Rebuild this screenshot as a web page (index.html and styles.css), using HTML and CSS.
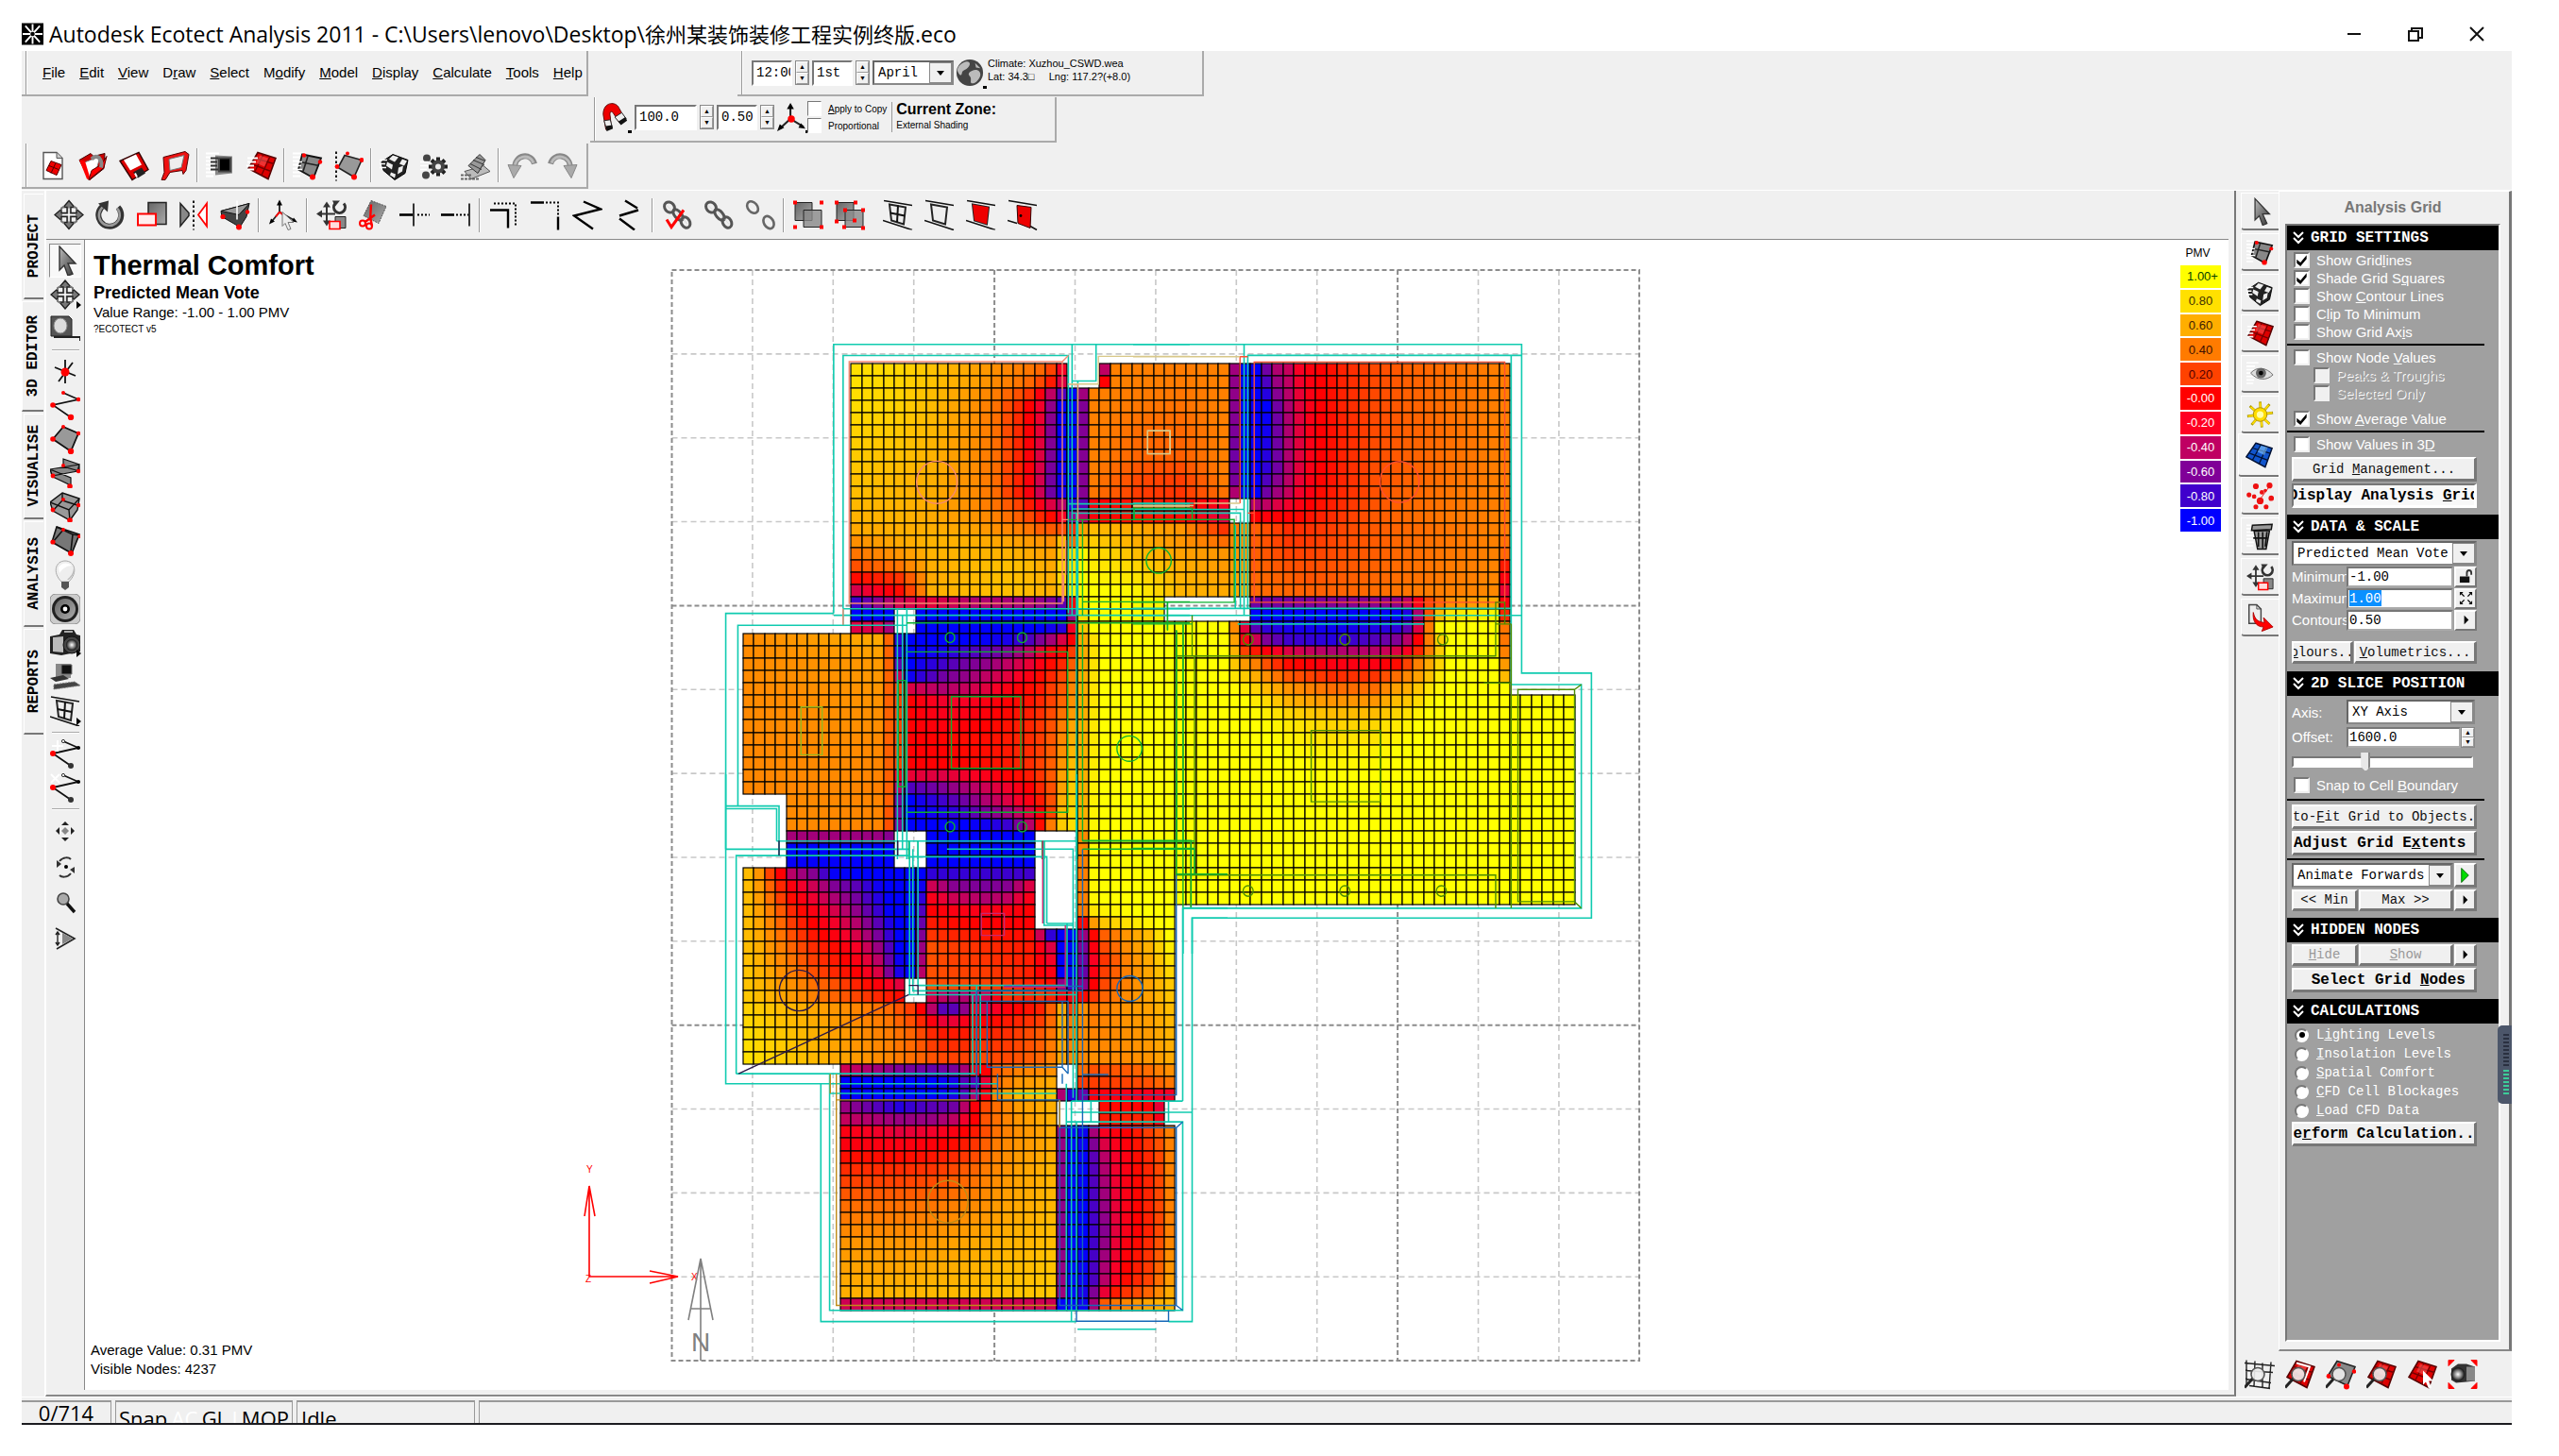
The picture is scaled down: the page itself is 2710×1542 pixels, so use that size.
FILE: index.html
```html
<!DOCTYPE html>
<html lang="en">
<head>
<meta charset="utf-8">
<title>Autodesk Ecotect Analysis 2011</title>
<link rel="stylesheet" href="styles.css">
</head>
<body>
<svg class="sprite" aria-hidden="true">
  <defs>
    <linearGradient id="g" x1="0" y1="0" x2="1" y2="1"><stop offset="0" stop-color="#bbb"/><stop offset="1" stop-color="#333"/></linearGradient>
    <linearGradient id="lg" x1="0" y1="0" x2="1" y2="1"><stop offset="0" stop-color="#fff"/><stop offset="1" stop-color="#999"/></linearGradient>
    <linearGradient id="mg" x1="0" y1="0" x2="1" y2="1"><stop offset="0" stop-color="#666"/><stop offset="1" stop-color="#aaa"/></linearGradient>
    <radialGradient id="rg"><stop offset="0" stop-color="#fff"/><stop offset=".6" stop-color="#777"/><stop offset="1" stop-color="#111"/></radialGradient>
  </defs>
  <symbol id="move" viewBox="0 0 32 32"><path d="M16 1l6 7h-4v6h6v-4l7 6-7 6v-4h-6v6h4l-6 7-6-7h4v-6H8v4l-7-6 7-6v4h6V8h-4z" fill="#777" stroke="#222" stroke-width="1.4"/><path d="M8 11v-2l3-2M21 7l3 2v2M8 21v2l3 2M21 25l3-2v-2" fill="none" stroke="#777" stroke-width="2"/><path d="M16 9v14M9 16h14" stroke="#fff" stroke-width="1.5"/></symbol>
  <symbol id="rotate" viewBox="0 0 32 32"><path d="M9 6a12 12 0 1 0 15 2" fill="none" stroke="#333" stroke-width="6"/><path d="M9 7a11 11 0 1 0 14 2" fill="none" stroke="#999" stroke-width="2.5"/><path d="M3 4L14 1l-1 12z" fill="#333"/></symbol>
  <symbol id="scale" viewBox="0 0 32 32"><path d="M12 3h19v23H12z" fill="url(#mg)" stroke="#222" stroke-width="1.5"/><path d="M1 15h19v12H1z" fill="#fee" stroke="red" stroke-width="2"/></symbol>
  <symbol id="mirror" viewBox="0 0 32 32"><path d="M2 4l9 10v3L2 28z" fill="#888" stroke="#222" stroke-width="1.5"/><path d="M30 4l-9 12 9 12z" fill="#fff" stroke="red" stroke-width="1.8"/><path d="M16 1v31" stroke="#000" stroke-width="1.8" stroke-dasharray="2.5 2.5"/></symbol>
  <symbol id="extrude" viewBox="0 0 32 32"><path d="M1 12l30-8-3 14-7 11-19-11z" fill="#444" stroke="#111"/><path d="M1 12l30-8-11 12z" fill="#999" stroke="#111"/><path d="M18 1v20" stroke="#fff" stroke-width="1.6"/><g fill="red"><circle cx="3" cy="18" r="2.6"/><circle cx="29" cy="13" r="2.2"/><circle cx="20" cy="29" r="3"/></g></symbol>
  <symbol id="axiscur" viewBox="0 0 32 32"><path d="M12 2v11L3 24M12 13l16 9" fill="none" stroke="#222" stroke-width="1.8"/><path d="M12 0l3 6H9zM1 26l2-6 4 3zM31 24l-6-1 2-4z"/><path d="M12 13l-4 5M12 13l5 4" stroke="red" stroke-width="2"/><path d="M15 13l12 11-6 0 3 7-3 1-3-7-3 3z" fill="#eee" stroke="#777"/></symbol>
  <symbol id="xform" viewBox="0 0 32 32"><path d="M11 6v18M2 15h18" stroke="#333" stroke-width="2"/><path d="M11 2L7 8h8zM11 28l-4-6h8zM0 15l6-4v8z" fill="#333"/><path d="M20 4a6 6 0 1 0 9 0" fill="none" stroke="#333" stroke-width="3"/><path d="M17 1h8l-5 6z" fill="#333"/><path d="M20 18h11v12H20z" fill="#888" stroke="#222"/><path d="M14 23h11v8H14z" fill="#fdd" stroke="red" stroke-width="1.6"/></symbol>
  <symbol id="cut" viewBox="0 0 32 32"><path d="M14 1l16 6-8 18-16-8z" fill="url(#mg)" stroke="#555" stroke-dasharray="2 1"/><path d="M14 5l-1 17M7 24l11-8M13 18l2 10" stroke="red" stroke-width="2.4"/><circle cx="5" cy="25" r="3" fill="none" stroke="red" stroke-width="2"/><circle cx="12" cy="28" r="3" fill="none" stroke="red" stroke-width="2"/></symbol>
  <symbol id="trim" viewBox="0 0 32 32"><path d="M0 16h15" stroke="#000" stroke-width="2.6"/><path d="M15 4v24" stroke="#333" stroke-width="2"/><path d="M19 16h13" stroke="#000" stroke-width="2" stroke-dasharray="2 2"/></symbol>
  <symbol id="extend" viewBox="0 0 32 32"><path d="M0 16h14" stroke="#000" stroke-width="2.6"/><path d="M30 4v24" stroke="#333" stroke-width="2"/><path d="M16 16h13" stroke="#000" stroke-width="2" stroke-dasharray="2 2"/></symbol>
  <symbol id="fillet" viewBox="0 0 32 32"><path d="M1 11h19v19" fill="none" stroke="#000" stroke-width="2.4"/><path d="M5 4h23v24" fill="none" stroke="#000" stroke-width="2" stroke-dasharray="2 2"/></symbol>
  <symbol id="chamfer" viewBox="0 0 32 32"><path d="M0 3h14M29 18v14" stroke="#000" stroke-width="2.4"/><path d="M16 3h13v14" fill="none" stroke="#000" stroke-width="2" stroke-dasharray="2 2"/></symbol>
  <symbol id="zig" viewBox="0 0 32 32"><path d="M12 2l18 8L2 17l20 14" fill="none" stroke="#000" stroke-width="2.4"/></symbol>
  <symbol id="zig2" viewBox="0 0 32 32"><path d="M12 1l13 8M26 11L6 17M6 20l16 12" fill="none" stroke="#000" stroke-width="2.4"/></symbol>
  <symbol id="chain" viewBox="0 0 32 32"><g fill="none" stroke="#555" stroke-width="3"><ellipse cx="8" cy="8" rx="5" ry="6" transform="rotate(-40 8 8)"/><ellipse cx="17" cy="16" rx="3.5" ry="7" transform="rotate(-40 17 16)"/><ellipse cx="25" cy="24" rx="4.5" ry="6" transform="rotate(-30 25 24)"/></g><path d="M5 6l5 5M15 13l5 6M23 21l4 5" stroke="#ddd"/></symbol>
  <symbol id="link" viewBox="0 0 32 32"><use href="#chain"/><path d="M5 21l5 8L23 11" fill="none" stroke="red" stroke-width="3"/></symbol>
  <symbol id="unlink" viewBox="0 0 32 32"><g fill="none" stroke="#666" stroke-width="2.6"><ellipse cx="8" cy="8" rx="5" ry="7" transform="rotate(-40 8 8)"/><ellipse cx="25" cy="24" rx="5" ry="7" transform="rotate(-30 25 24)"/></g></symbol>
  <symbol id="group" viewBox="0 0 32 32"><path d="M2 3h18v19H2z" fill="url(#mg)" stroke="#222"/><path d="M11 11h19v18H11z" fill="#888" fill-opacity=".8" stroke="#222"/><path d="M0 1h4v4H0zM28 1h4v4h-4zM0 27h4v4H0zM28 27h4v4h-4z" fill="red"/></symbol>
  <symbol id="group2" viewBox="0 0 32 32"><path d="M2 3h18v19H2z" fill="url(#mg)" stroke="#222"/><path d="M11 11h19v18H11z" fill="#888" fill-opacity=".8" stroke="#222"/><path d="M0 1h4v4H0zM20 1h4v4h-4zM0 21h4v4H0zM9 9h4v4H9zM28 9h4v4h-4zM28 28h4v4h-4zM8 27h4v4H8zM19 20h4v4h-4z" fill="red"/></symbol>
  <symbol id="void" viewBox="0 0 32 32"><path d="M1 1l30 5M0 22l31 10" stroke="#111" stroke-width="1.6"/><path d="M7 5l17 3-2 18-13-4z" fill="#eee" stroke="#222" stroke-width="2"/></symbol>
  <symbol id="window" viewBox="0 0 32 32"><use href="#void"/><path d="M16 6l-1 18M8 14l15 3" stroke="#111" stroke-width="2"/></symbol>
  <symbol id="panelred" viewBox="0 0 32 32"><use href="#void"/><path d="M7 5l17 3-2 18-13-4z" fill="#e00"/></symbol>
  <symbol id="door" viewBox="0 0 32 32"><path d="M1 1l30 5M0 22l10 3M24 28l7 4" stroke="#111" stroke-width="1.6"/><path d="M10 6l15 2-1 22-13-5z" fill="#e00" stroke="#300"/><circle cx="14" cy="17" r="1.4"/></symbol>
  <symbol id="doc" viewBox="0 0 32 32"><path d="M6 2h14l6 6v22H6z" fill="#fff" stroke="#555" stroke-width="1.4"/><path d="M20 2v6h6" fill="#ccc" stroke="#555"/><path d="M14 11l11 4-5 11-11-5z" fill="#e00" stroke="#500"/><path d="M12 16l10 4M19 13l-5 11" stroke="#500"/></symbol>
  <symbol id="open" viewBox="0 0 32 32"><path d="M1 10L13 3l3 3 12-3-1 16-15 12z" fill="#c00" stroke="#400"/><path d="M5 13l18-7-4 15-8 10z" fill="#fff" stroke="#777"/><path d="M1 10l6 1 6 20-4-1z" fill="red"/><path d="M11 31L27 18l3-12-6 9-10 6z" fill="red" stroke="#500"/><path d="M14 9c6-6 12 0 10 9" fill="none" stroke="#888" stroke-width="4"/></symbol>
  <symbol id="save" viewBox="0 0 32 32"><path d="M1 11L21 2l10 18-17 11z" fill="#d00" stroke="#300" stroke-width="1.4"/><path d="M5 10l13-6 6 11-12 6z" fill="#fff"/><path d="M15 23l9-5 4 6-8 5z" fill="#222"/><path d="M17 24l2 4" stroke="#fff" stroke-width="2"/></symbol>
  <symbol id="book" viewBox="0 0 32 32"><path d="M4 7L27 1l4 3-3 17-3 4-1-4-13 2-5 8H2l3-8z" fill="#e11" stroke="#500"/><path d="M10 9l16-4-3 13-12 3z" fill="#eee" stroke="#777"/></symbol>
  <symbol id="speed" viewBox="0 0 32 32"><path d="M0 3h14M0 7h10M0 11h12M0 15h9M0 19h10M0 23h9M0 27h8" stroke="#fff" stroke-width="1.8"/></symbol>
  <symbol id="print" viewBox="0 0 32 32"><use href="#speed"/><path d="M10 5l18 1v18l-18 2z" fill="#888"/><path d="M14 8h12v14H14z" fill="#000" stroke="#444" stroke-width="2"/><path d="M5 8h8M5 12h7M5 16h7M5 20h8" stroke="#333" stroke-width="2"/></symbol>
  <symbol id="mesh" viewBox="0 0 32 32"><path d="M12 2l19 6-8 22-21-11z" fill="#d00" stroke="#500" stroke-width="1.6"/><path d="M18 4l-9 18M25 6l-9 20M9 8l20 6M5 14l21 8" stroke="#700" stroke-width="1.4"/><path d="M14 5l9 3-4 9-9-4z" fill="#f66" opacity=".5"/></symbol>
  <symbol id="redgrid" viewBox="0 0 32 32"><use href="#mesh"/><path d="M1 8h11M1 12h9M0 16h8M1 20h7" stroke="#fff" stroke-width="1.8"/></symbol>
  <symbol id="bluegrid" viewBox="0 0 32 32"><path d="M12 2l19 6-8 22L1 18z" fill="#15c" stroke="#013" stroke-width="1.6"/><path d="M18 4l-10 18M25 6l-9 20M9 8l20 6M5 14l21 8" stroke="#013" stroke-width="1.4"/><path d="M18 5l8 2-4 9-8-4z" fill="#8cf" opacity=".6"/></symbol>
  <symbol id="grayplane" viewBox="0 0 32 32"><use href="#speed"/><path d="M10 4l20 4-8 21-16-9z" fill="#888" stroke="#111" stroke-width="1.8"/><path d="M8 12l20 4M16 6l-5 16" stroke="#222" stroke-width="1.6"/><path d="M4 12h6M3 16h6M4 20h6" stroke="#fff" stroke-width="1.6"/><g fill="red"><circle cx="12" cy="5" r="2.2"/><circle cx="29" cy="12" r="2.2"/><circle cx="21" cy="28" r="3"/></g></symbol>
  <symbol id="dotplane" viewBox="0 0 32 32"><path d="M12 5l18 5-8 18-17-10z" fill="#999" stroke="#222" stroke-width="1.6"/><path d="M3 1v31" stroke="#000" stroke-width="1.8" stroke-dasharray="2.5 2.5"/><g fill="red"><circle cx="15" cy="3" r="2"/><circle cx="30" cy="10" r="2.4"/><circle cx="4" cy="17" r="2.4"/><circle cx="22" cy="28" r="3"/></g></symbol>
  <symbol id="cube" viewBox="0 0 32 32"><path d="M14 4l16 6-3 14-11 7L4 21 2 12z" fill="#222" stroke="#000"/><path d="M14 5l6 2-4 5-6-3zM24 9l5 2-3 5-5-2zM8 12l6 3-1 5-6-4zM20 18l5-2-1 6-5 3zM12 23l5 2-1 4-5-3z" fill="#eee"/><path d="M0 10h8M0 14h6M0 18h7" stroke="#fff" stroke-width="1.6"/></symbol>
  <symbol id="gear" viewBox="0 0 32 32"><g stroke="#222" stroke-width="4"><path d="M19 7v20M9 17h20M12 10l14 14M26 10L12 24"/></g><circle cx="19" cy="17" r="7" fill="#444"/><circle cx="19" cy="17" r="3" fill="#eee"/><circle cx="7" cy="8" r="4" fill="#444"/><circle cx="6" cy="26" r="4" fill="#444"/><path d="M0 12h9M0 16h8M0 20h7" stroke="#fff" stroke-width="1.6"/></symbol>
  <symbol id="stack" viewBox="0 0 32 32"><path d="M4 22l20-6 7 6-20 8z" fill="#bbb" stroke="#555"/><path d="M8 16l12-12 6 6-8 14z" fill="#999" stroke="#333"/><path d="M10 14l12 6M13 10l12 5M16 7l10 4" stroke="#333"/><path d="M0 26h12M0 30h20" stroke="#666" stroke-width="2" stroke-dasharray="3 1"/></symbol>
  <symbol id="undo" viewBox="0 0 32 32"><path d="M8 19C8 3 26 2 29 14" fill="none" stroke="#888" stroke-width="6"/><path d="M8 19C8 4 25 3 28 13" fill="none" stroke="#bbb" stroke-width="3"/><path d="M1 15l14 1-8 13z" fill="#aaa" stroke="#888"/></symbol>
  <symbol id="redo" viewBox="0 0 32 32"><path d="M24 19C24 3 6 2 3 14" fill="none" stroke="#888" stroke-width="6"/><path d="M24 19C24 4 7 3 4 13" fill="none" stroke="#bbb" stroke-width="3"/><path d="M31 15l-14 1 8 13z" fill="#aaa" stroke="#888"/></symbol>
  <symbol id="arrow" viewBox="0 0 32 32"><path d="M10 1l17 18h-8l5 11-5 2-4-11-5 5z" fill="url(#g)" stroke="#333" stroke-width="1.4"/></symbol>
  <symbol id="tape" viewBox="0 0 32 32"><path d="M1 3h19l3 3v18H1z" fill="#555" stroke="#222"/><ellipse cx="11" cy="13" rx="7" ry="8" fill="#ddd" stroke="#888"/><path d="M4 25h28v4" fill="none" stroke="#222" stroke-width="2"/></symbol>
  <symbol id="node" viewBox="0 0 32 32"><path d="M16 4v25M5 12l22 9M24 7L9 27" stroke="#111" stroke-width="1.8"/><circle cx="16" cy="17" r="4.5" fill="red"/></symbol>
  <symbol id="polyline" viewBox="0 0 32 32"><path d="M14 3l16 7L3 16l19 13" fill="none" stroke="#111" stroke-width="1.6"/><g fill="red"><circle cx="14" cy="3" r="2"/><circle cx="30" cy="10" r="2.2"/><circle cx="3" cy="16" r="2.8"/><circle cx="22" cy="29" r="3.2"/></g></symbol>
  <symbol id="plane" viewBox="0 0 32 32"><path d="M14 3l16 7-8 19L3 16z" fill="#999" stroke="#111" stroke-width="1.8"/><g fill="red"><circle cx="14" cy="3" r="2"/><circle cx="30" cy="10" r="2.2"/><circle cx="3" cy="16" r="2.8"/><circle cx="22" cy="29" r="3.2"/></g></symbol>
  <symbol id="wall" viewBox="0 0 32 32"><path d="M14 1l17 6v7l-17-5zM0 12l31-5-2 7-27 5zM0 12l22 9v8L3 20z" fill="#888" stroke="#111" stroke-width="1.2"/><g fill="red"><circle cx="14" cy="8" r="2"/><circle cx="30" cy="14" r="2.2"/><circle cx="3" cy="19" r="2.4"/><circle cx="21" cy="30" r="2.8"/></g></symbol>
  <symbol id="box" viewBox="0 0 32 32"><path d="M13 1l18 6-2 12-8 11L3 20 0 11z" fill="#999" stroke="#111" stroke-width="1.4"/><path d="M0 11l20 8 11-12M20 19l1 11M13 1v8L3 20M13 9l16 5" fill="none" stroke="#111" stroke-width="1.4"/><g fill="red"><circle cx="14" cy="8" r="2"/><circle cx="30" cy="14" r="2.2"/><circle cx="3" cy="19" r="2.4"/><circle cx="21" cy="30" r="2.8"/></g></symbol>
  <symbol id="roof" viewBox="0 0 32 32"><path d="M7 1l24 8-8 20L2 17z" fill="#777" stroke="#111" stroke-width="1.6"/><path d="M7 1l17 8-2 18M24 9l7 1M14 4L3 17" fill="none" stroke="#111" stroke-width="1.6"/><g fill="red"><circle cx="14" cy="4" r="2"/><circle cx="31" cy="11" r="2"/><circle cx="3" cy="17" r="2.6"/><circle cx="22" cy="29" r="3"/></g></symbol>
  <symbol id="bulb" viewBox="0 0 32 32"><path d="M12 23C2 13 6 1 16 1s14 12 4 22z" fill="#eee" stroke="#aaa"/><path d="M9 8c3-5 9-6 14-2-5 0-10 3-13 8z" fill="#fff"/><path d="M20 21c5-5 7-9 5-14 0 8-4 11-7 14z" fill="#bbb"/><path d="M12 23h8v6l-4 3-4-3z" fill="#555"/></symbol>
  <symbol id="speaker" viewBox="0 0 32 32"><rect width="32" height="32" rx="6" fill="#ccc" stroke="#888"/><circle cx="16" cy="16" r="14" fill="#222"/><circle cx="16" cy="16" r="11" fill="url(#mg)"/><circle cx="16" cy="16" r="5" fill="#000"/><circle cx="16" cy="16" r="2.4" fill="#fff"/></symbol>
  <symbol id="camera" viewBox="0 0 32 32"><path d="M0 9l10-2 3-5h12l3 5 4 1v17l-20 4L0 27z" fill="#222"/><path d="M3 10l11-1v17l-11-1z" fill="#bbb"/><circle cx="23" cy="18" r="9" fill="#444" stroke="#111"/><circle cx="23" cy="18" r="6" fill="url(#rg)"/><path d="M15 4h9" stroke="#aaa" stroke-width="2"/></symbol>
  <symbol id="pc" viewBox="0 0 32 32"><path d="M6 2h16v15H6z" fill="#888"/><path d="M12 3h11v10H12z" fill="#111" stroke="#777"/><path d="M0 17l14-3 6 4-14 3z" fill="#333"/><path d="M4 24l22-3 6 4-28 4z" fill="#444" stroke="#777" stroke-dasharray="2 1"/></symbol>
  <symbol id="polyadd" viewBox="0 0 32 32"><path d="M14 3l16 7L3 16l19 13" fill="none" stroke="#111" stroke-width="1.8"/><circle cx="14" cy="3" r="1.6" fill="#fff" stroke="#333"/><circle cx="30" cy="10" r="2"/><circle cx="22" cy="29" r="3" fill="#333"/><circle cx="3" cy="16" r="3" fill="red"/><path d="M8 2v12M2 8h12" stroke="#fff" stroke-width="2"/></symbol>
  <symbol id="polydel" viewBox="0 0 32 32"><path d="M14 3l16 7L3 16l19 13" fill="none" stroke="#111" stroke-width="1.8"/><circle cx="14" cy="3" r="1.6" fill="#fff" stroke="#333"/><circle cx="30" cy="10" r="2"/><circle cx="22" cy="29" r="3" fill="#333"/><circle cx="3" cy="16" r="3" fill="red"/><path d="M1 2l9 9M10 2l-9 9" stroke="#fff" stroke-width="2"/></symbol>
  <symbol id="pan" viewBox="0 0 32 32"><path d="M16 6l4 4h-8zM16 27l4-4h-8zM6 16l4-4v8zM26 16l-4-4v8z" fill="#222"/><path d="M16 12l4 4-4 4-4-4z" fill="#888"/></symbol>
  <symbol id="orbit" viewBox="0 0 32 32"><path d="M10 10c4-5 10-4 12-2M22 23c-4 5-10 4-12 2" fill="none" stroke="#333" stroke-width="2"/><path d="M7 9l5 4-5 4zM26 23l-5-4 5-3z" fill="#333"/><circle cx="17" cy="16" r="2"/></symbol>
  <symbol id="zoom" viewBox="0 0 32 32"><circle cx="14" cy="12" r="6" fill="#aaa" stroke="#444" stroke-width="1.6"/><path d="M18 17l8 9" stroke="#111" stroke-width="3.4"/></symbol>
  <symbol id="fov" viewBox="0 0 32 32"><path d="M6 5l20 11L7 27" fill="none" stroke="#222" stroke-width="1.6"/><path d="M13 10l11 6-11 6z" fill="#888"/><path d="M8 10v12M6 12l2-3 2 3M6 20l2 3 2-3" fill="none" stroke="#222" stroke-width="1.4"/></symbol>
  <symbol id="magnet" viewBox="0 0 32 32"><path d="M6 30L3 13C3-2 18-2 21 6l6 11-6 5-7-11c-3-3-4 0-3 5l1 11z" fill="#e00" stroke="#500"/><path d="M4 20l7-1 2 8-6 4zM16 16l8-5 5 7-7 5z" fill="#eee" stroke="#222"/><path d="M6 26l7-1 1 4-7 3zM20 21l8-5 2 4-7 5z" fill="#111"/></symbol>
  <symbol id="axes" viewBox="0 0 32 32"><path d="M15 2v16L3 29M15 18l15 9" fill="none" stroke="#222" stroke-width="2.2"/><path d="M15 0l4 7h-8zM0 32l3-8 5 4zM32 29l-8-1 3-5z"/><circle cx="16" cy="18" r="4" fill="red"/></symbol>
  <symbol id="globe" viewBox="0 0 32 32"><circle cx="16" cy="16" r="15" fill="#444"/><path d="M8 5c8-4 10 1 6 5s-6 2-7 7-5-2-5-4 2-6 6-8zM18 14c6-3 10 0 10 4s-5 10-9 10 0-5-3-8 0-5 2-6zM22 5l6 6-5-1z" fill="#bbb"/></symbol>
  <symbol id="eye" viewBox="0 0 32 32"><use href="#speed"/><path d="M5 15c7-8 18-7 26 2-7 7-18 7-26-2z" fill="#ddd" stroke="#666"/><circle cx="17" cy="15" r="6" fill="#666"/><circle cx="17" cy="15" r="2.6"/></symbol>
  <symbol id="sun" viewBox="0 0 32 32"><g stroke="#a90" stroke-width="3"><path d="M16 1l2 30M1 18l30-4M4 6l23 21M27 4L6 28"/></g><g stroke="#fd0" stroke-width="2"><path d="M16 2l2 28M2 18l28-4M5 7l22 20M26 5L7 27"/></g><circle cx="16" cy="16" r="8" fill="#fd0" stroke="#a80"/><circle cx="16" cy="16" r="4" fill="#ffa"/></symbol>
  <symbol id="reddots" viewBox="0 0 32 32"><g fill="#e11"><circle cx="11" cy="5" r="3.4"/><circle cx="27" cy="4" r="3.4"/><circle cx="3" cy="15" r="2.8"/><circle cx="9" cy="17" r="2.6"/><circle cx="18" cy="12" r="2.6"/><circle cx="29" cy="19" r="3.2"/><circle cx="16" cy="22" r="4"/><circle cx="11" cy="29" r="2.8"/><circle cx="23" cy="29" r="2.8"/><circle cx="22" cy="10" r="2"/></g><path d="M16 20L27 5" stroke="#e11"/></symbol>
  <symbol id="trash" viewBox="0 0 32 32"><use href="#speed"/><path d="M7 3l23-1-1 6-23 1zM9 10l18-1-4 22H13z" fill="#999" stroke="#111" stroke-width="1.6"/><path d="M14 11v17M19 11v19M24 11l-2 17M8 18h17" stroke="#111" stroke-width="1.8"/></symbol>
  <symbol id="export" viewBox="0 0 32 32"><path d="M3 1h9l5 5v17H3z" fill="#eee" stroke="#444" stroke-width="1.6"/><path d="M12 1v5h5" fill="none" stroke="#444"/><path d="M8 10c2 9 6 11 13 12l-1-6 11 11-13 5 2-5C11 27 7 20 8 10z" fill="red" stroke="#a00"/></symbol>
  <symbol id="lens" viewBox="0 0 32 32"><path d="M9 20l-9 10" stroke="#222" stroke-width="3"/><circle cx="14" cy="16" r="7" fill="#eee" fill-opacity=".9" stroke="#555" stroke-width="1.6"/></symbol>
  <symbol id="zoomgrid" viewBox="0 0 32 32"><path d="M2 1v27M11 2l-1 27M19 4v26M28 3l-2 28M0 4l32 3M1 12l29 2M1 21l27 4M5 28l22 3" stroke="#222" stroke-width="1.4"/><use href="#lens"/></symbol>
  <symbol id="zoomall" viewBox="0 0 32 32"><use href="#mesh"/><path d="M12 4l14 4-6 16" fill="none" stroke="#fff" stroke-width="2"/><use href="#lens"/></symbol>
  <symbol id="zoomplane" viewBox="0 0 32 32"><path d="M12 2l19 6-8 20L2 18z" fill="#888" stroke="#222" stroke-width="1.6"/><g fill="red"><circle cx="14" cy="6" r="2"/><circle cx="3" cy="18" r="2.4"/><circle cx="30" cy="13" r="2.2"/><circle cx="22" cy="29" r="3"/></g><use href="#lens"/></symbol>
  <symbol id="zoommesh" viewBox="0 0 32 32"><use href="#mesh"/><use href="#lens"/></symbol>
  <symbol id="pickmesh" viewBox="0 0 32 32"><use href="#mesh"/><path d="M17 12l11 11h-5l3 7-3 1-3-7-3 3z" fill="#fff"/></symbol>
  <symbol id="snapshot" viewBox="0 0 32 32"><path d="M1 1h6L1 7zM31 1h-6l6 6zM1 31h6l-6-6zM31 31h-6l6-6z" fill="red" stroke="red"/><path d="M4 10l7-5h9l9 3v15l-9 1-11 1-5-3z" fill="#333"/><path d="M20 8h9v15h-9z" fill="#888"/><circle cx="11" cy="16" r="7" fill="url(#rg)" stroke="#222"/></symbol>
</svg>

<header class="titlebar">
  <svg class="logo" viewBox="0 0 24 24" aria-hidden="true"><path d="M0 0h24v24H0z"/><path d="M12 1v22M1 12h22M4 3l16 18M20 3L4 21" stroke="#fff" stroke-width="2"/><circle cx="12" cy="12" r="2.4"/></svg>
  <h1>Autodesk Ecotect Analysis 2011 - C:\Users\lenovo\Desktop\<span lang="zh">徐州某装饰装修工程实例终版</span>.eco</h1>
  <div class="wincontrols">
    <button aria-label="Minimize"><svg viewBox="0 0 16 16"><path d="M1 8h14"/></svg></button>
    <button aria-label="Restore"><svg viewBox="0 0 16 16"><path d="M1 5h10v10H1zM4 5V2h11v10h-4"/></svg></button>
    <button aria-label="Close"><svg viewBox="0 0 16 16"><path d="M1 1l14 14M15 1L1 15"/></svg></button>
  </div>
</header>

<div class="app">
  <div class="bars">
    <div class="barrow">
      <nav class="bar menubar">
        <a href="#"><u>F</u>ile</a><a href="#"><u>E</u>dit</a><a href="#"><u>V</u>iew</a><a href="#">D<u>r</u>aw</a><a href="#"><u>S</u>elect</a><a href="#">M<u>o</u>dify</a><a href="#"><u>M</u>odel</a><a href="#"><u>D</u>isplay</a><a href="#"><u>C</u>alculate</a><a href="#"><u>T</u>ools</a><a href="#"><u>H</u>elp</a>
      </nav>
      <div class="bar datebar">
        <input class="field short" aria-label="Time" value="12:00"><span class="spin"><button aria-label="Later">▲</button><button aria-label="Earlier">▼</button></span>
        <input class="field short" aria-label="Day" value="1st"><span class="spin"><button aria-label="Next day">▲</button><button aria-label="Previous day">▼</button></span>
        <span class="combo month"><select aria-label="Month"><option>April</option></select><i></i></span>
        <button class="drop" aria-label="Location"><svg><use href="#globe"/></svg></button>
        <p class="climate">Climate: Xuzhou_CSWD.wea<br>Lat: 34.3□ &nbsp; &nbsp; Lng: 117.2?(+8.0)</p>
      </div>
    </div>
    <div class="barrow">
      <div class="bar snapbar">
        <button class="drop" aria-label="Snap"><svg><use href="#magnet"/></svg></button>
        <input class="field long" aria-label="Grid size" value="100.0"><span class="spin"><button aria-label="Larger grid">▲</button><button aria-label="Smaller grid">▼</button></span>
        <input class="field short" aria-label="Snap step" value="0.50"><span class="spin"><button aria-label="Larger step">▲</button><button aria-label="Smaller step">▼</button></span>
        <button class="drop axesbtn" aria-label="Axes"><svg><use href="#axes"/></svg></button>
        <div class="tinychecks">
          <label><input type="checkbox"><span><u>A</u>pply to Copy</span></label>
          <label><input type="checkbox"><span>Proportional</span></label>
        </div>
        <p class="zone"><b>Current Zone:</b><br>External Shading</p>
      </div>
    </div>
    <div class="barrow">
      <div class="bar iconbar">
        <button class="tool" aria-label="New"><svg><use href="#doc"/></svg></button>
        <button class="tool" aria-label="Open"><svg><use href="#open"/></svg></button>
        <button class="tool" aria-label="Save"><svg><use href="#save"/></svg></button>
        <button class="tool" aria-label="Library"><svg><use href="#book"/></svg></button>
        <i class="sep"></i>
        <button class="tool" aria-label="Print"><svg><use href="#print"/></svg></button>
        <button class="tool" aria-label="Model grid"><svg><use href="#redgrid"/></svg></button>
        <i class="sep"></i>
        <button class="tool" aria-label="Materials"><svg><use href="#grayplane"/></svg></button>
        <button class="tool" aria-label="Zones"><svg><use href="#dotplane"/></svg></button>
        <i class="sep"></i>
        <button class="tool" aria-label="Blocks"><svg><use href="#cube"/></svg></button>
        <button class="tool" aria-label="Settings"><svg><use href="#gear"/></svg></button>
        <button class="tool" aria-label="Schedules"><svg><use href="#stack"/></svg></button>
        <i class="sep"></i>
        <button class="tool" aria-label="Undo"><svg><use href="#undo"/></svg></button>
        <button class="tool" aria-label="Redo"><svg><use href="#redo"/></svg></button>
      </div>
    </div>
  </div>

  <div class="work">
    <nav class="pagetabs">
      <button><span>PROJECT</span></button>
      <button class="current"><span>3D EDITOR</span></button>
      <button><span>VISUALISE</span></button>
      <button><span>ANALYSIS</span></button>
      <button><span>REPORTS</span></button>
    </nav>

    <main class="editor">
      <div class="toolbar">
        <button class="tool" aria-label="Move"><svg><use href="#move"/></svg></button>
        <button class="tool" aria-label="Rotate"><svg><use href="#rotate"/></svg></button>
        <button class="tool" aria-label="Scale"><svg><use href="#scale"/></svg></button>
        <button class="tool" aria-label="Mirror"><svg><use href="#mirror"/></svg></button>
        <button class="tool" aria-label="Extrude"><svg><use href="#extrude"/></svg></button>
        <i class="sep"></i>
        <button class="tool" aria-label="Set origin"><svg><use href="#axiscur"/></svg></button>
        <i class="sep"></i>
        <button class="tool" aria-label="Transform"><svg><use href="#xform"/></svg></button>
        <button class="tool" aria-label="Cut"><svg><use href="#cut"/></svg></button>
        <button class="tool" aria-label="Trim"><svg><use href="#trim"/></svg></button>
        <button class="tool" aria-label="Extend"><svg><use href="#extend"/></svg></button>
        <i class="sep"></i>
        <button class="tool" aria-label="Offset"><svg><use href="#fillet"/></svg></button>
        <button class="tool" aria-label="Corner"><svg><use href="#chamfer"/></svg></button>
        <button class="tool" aria-label="Join"><svg><use href="#zig"/></svg></button>
        <button class="tool" aria-label="Break"><svg><use href="#zig2"/></svg></button>
        <i class="sep"></i>
        <button class="tool" aria-label="Check links"><svg><use href="#link"/></svg></button>
        <button class="tool" aria-label="Link"><svg><use href="#chain"/></svg></button>
        <button class="tool" aria-label="Unlink"><svg><use href="#unlink"/></svg></button>
        <i class="sep"></i>
        <button class="tool" aria-label="Group"><svg><use href="#group"/></svg></button>
        <button class="tool" aria-label="Ungroup"><svg><use href="#group2"/></svg></button>
        <i class="sep blank"></i>
        <button class="tool" aria-label="Add window"><svg><use href="#window"/></svg></button>
        <button class="tool" aria-label="Add void"><svg><use href="#void"/></svg></button>
        <button class="tool" aria-label="Add panel"><svg><use href="#panelred"/></svg></button>
        <button class="tool" aria-label="Add door"><svg><use href="#door"/></svg></button>
      </div>
      <div class="stage">
        <div class="sidebar">
          <button class="side pressed" aria-label="Select"><svg><use href="#arrow"/></svg></button>
          <button class="side more" aria-label="Move"><svg><use href="#move"/></svg></button>
          <button class="side" aria-label="Measure"><svg><use href="#tape"/></svg></button>
          <hr>
          <button class="side" aria-label="Point"><svg><use href="#node"/></svg></button>
          <button class="side" aria-label="Line"><svg><use href="#polyline"/></svg></button>
          <button class="side" aria-label="Plane"><svg><use href="#plane"/></svg></button>
          <button class="side" aria-label="Partition"><svg><use href="#wall"/></svg></button>
          <button class="side" aria-label="Zone"><svg><use href="#box"/></svg></button>
          <button class="side" aria-label="Roof"><svg><use href="#roof"/></svg></button>
          <button class="side" aria-label="Light"><svg><use href="#bulb"/></svg></button>
          <button class="side" aria-label="Speaker"><svg><use href="#speaker"/></svg></button>
          <button class="side more" aria-label="Camera"><svg><use href="#camera"/></svg></button>
          <button class="side" aria-label="Appliance"><svg><use href="#pc"/></svg></button>
          <button class="side more" aria-label="Window"><svg><use href="#window"/></svg></button>
          <hr>
          <button class="side" aria-label="Add node"><svg><use href="#polyadd"/></svg></button>
          <button class="side" aria-label="Delete node"><svg><use href="#polydel"/></svg></button>
          <hr>
          <button class="side view" aria-label="Pan"><svg><use href="#pan"/></svg></button>
          <button class="side view" aria-label="Orbit"><svg><use href="#orbit"/></svg></button>
          <button class="side view" aria-label="Zoom"><svg><use href="#zoom"/></svg></button>
          <button class="side view" aria-label="Field of view"><svg><use href="#fov"/></svg></button>
        </div>
        <section class="viewport">
          <svg class="plan" viewBox="90 254 2270 1218" role="img" aria-label="Floor plan with thermal comfort grid">
            <g id="refgrid"></g>
            <g id="heat"></g>
            <g class="lines" transform="translate(700 270) scale(.35714 .40816)">
              <path class="teal" d="M512 930V232H1568M540 918V261H1208V930M512 930H192V1542M228 1430V961H727M192 1430H350V1560M192 1437H343V1521M192 1542H736M343 1521H1232M540 918H1568M512 935H1568M1219 232V935M1219 327H1290V232M1236 327V935M701 920V1568M716 935V1540M729 920V1568M1232 670V1568M1208 646H1568M1219 659H1568M1219 670H1568M540 920V960"/>
              <path class="green" d="M1250 687V935M1208 687H1568M729 955H1568M729 1030H1206V1446H729M861 1146h206v186h-206zM1250 1521H1568M1250 960V1521M1502 900V973M1250 900H1568M1528 973V1521M1402 646V687M704 1104h21v276h-21zM1548 960V1521M735 1521V1568M762 1521V1568M1130 1521V1568M1136 1521V1568"/>
              <path class="dark" d="M1235 935V1568"/>
              <g class="green"><ellipse cx="1389" cy="1281" rx="37" ry="33"/><ellipse cx="857" cy="993" rx="14" ry="13"/><ellipse cx="1071" cy="993" rx="14" ry="13"/><ellipse cx="857" cy="1484" rx="14" ry="13"/><ellipse cx="1071" cy="1484" rx="14" ry="13"/></g>
              <ellipse class="green" cx="1476" cy="793" rx="37" ry="33"/>
              <path class="salmon" d="M558 904V277H1190V904zM1190 277l18-16M1190 687h18M1200 740V830M1194 830V900M540 918V960M1208 335H1236V690"/>
              <ellipse class="salmon" cx="818" cy="590" rx="60" ry="55"/>
              <path class="tan" d="M1443 456h66v60h-66zM1568 263H1297V335H1208M1400 652H1568"/>
              <path class="lime" d="M415 1173h63v124h-63z"/>
            </g>
            <g class="lines" transform="translate(1200 330) scale(.35714 .43365)">
              <path class="teal" d="M0 80H1152V883H1359V1481H175V1568M340 725V107H1152M1121 107V911H1329V1457H148V1568M329 80V742M0 725H1120M0 742H1152M310 763H863M0 468H179M0 483H330M0 492H318V725M303 522V725"/>
              <path class="orange" d="M359 708V123H1102V708M345 710H1102M317 468V110H340M340 492H359"/>
              <ellipse class="orange" cx="790" cy="416" rx="58" ry="50"/>
              <path class="tan" d="M43 291h67v56H43zM0 110H317M0 474H179M180 468H317"/>
              <path class="moss" d="M128 779V1376M528 1023h205v174H528zM175 742V841M128 841H1075V710H1102V763M182 841V1376M128 1376H1075V1457M171 1295V1457M1141 923H1309V1441H1141zM1121 763V1457M1040 907H1121M1309 923l20-12M1309 1441l20 16M1075 763H1121"/>
              <g class="moss"><ellipse cx="341" cy="801" rx="15" ry="13"/><ellipse cx="628" cy="801" rx="15" ry="13"/><ellipse cx="918" cy="801" rx="15" ry="13"/><ellipse cx="341" cy="1415" rx="15" ry="13"/><ellipse cx="628" cy="1415" rx="15" ry="13"/><ellipse cx="914" cy="1415" rx="15" ry="13"/></g>
              <path class="green" d="M0 710H300V508H0M3 508V480H175V508M148 763V1457M0 763H175M0 1293H182M0 1311H182M102 710V779M128 779V1293"/>
            </g>
            <g class="lines" transform="translate(740 820) scale(.35714 .40816)">
              <path class="teal" d="M80 0V803H886M111 777V211H623M111 777H820M625 172V572H1120M635 194V562H1095M650 172V548H1095M1024 172V392H1108M1032 387V214H625M1032 387H1108M1092 387V548M736 194H1110V840M1120 0V848M812 572V777M824 548V777M835 572V777M388 777V1391H1435V902H1090M362 803V1420H1120M1393 1420H1463V373H1568M1435 848V347H1568M1105 848H1435M1105 877H1463M1090 803V1391M1105 848V1420M1120 902V1391M1163 848V902M1393 848V902M388 828H1060M1123 1440H1356"/>
              <path class="blue" d="M1138 194V1380M1416 259V832H1138M855 589H1078V760H855zM835 589H1095V777M1078 760l17 17M824 845V562H1138M905 550H1138M886 777V845H1070V1378H1416V917H1070M1416 917l19-15M1416 1378l19 13M1120 1391V1419H1393V1391M1138 779H1215M1078 777V803"/>
              <ellipse class="blue" cx="1278" cy="556" rx="38" ry="33"/>
              <path class="navy" d="M118 777L623 572M238 172V211M590 172V211M623 548H650V572"/>
              <ellipse class="navy" cx="297" cy="561" rx="58" ry="53"/>
              <path class="magenta" d="M838 361h68v57h-68zM1020 172V387M1087 392V548M905 552H1087"/>
              <path class="gold" d="M408 777V1378H1060M408 845H824M390 777V828M1070 845V917"/>
              <ellipse class="gold" cx="739" cy="1109" rx="59" ry="55"/>
              <path class="green" d="M1138 172H1460V345M1138 194H1470V259M1416 0V259H1568"/>
            </g>
            <g class="axis"><path d="M624 1352V1256M619 1288L624 1256L630 1288M624 1352H718M688 1346L718 1352L688 1359M711 1352H718"/><text x="621" y="1242">Y</text><text x="732" y="1356">X</text><text x="620" y="1358">Z</text></g>
            <g class="north"><path d="M742 1333V1441M729 1398L742 1333L755 1398M732 1386H752"/><text x="732" y="1431">N</text></g>
          </svg>
          <div class="caption">
            <h2>Thermal Comfort</h2>
            <h3>Predicted Mean Vote</h3>
            <p>Value Range: -1.00 - 1.00 PMV</p>
            <small>?ECOTECT v5</small>
          </div>
          <div class="legend">
            <span>PMV</span>
            <ul>
              <li class="l10">1.00+</li><li class="l9">0.80</li><li class="l8">0.60</li><li class="l7">0.40</li><li class="l6">0.20</li><li class="l5">-0.00</li><li class="l4">-0.20</li><li class="l3">-0.40</li><li class="l2">-0.60</li><li class="l1">-0.80</li><li class="l0">-1.00</li>
            </ul>
          </div>
          <p class="summary">Average Value: 0.31 PMV<br>Visible Nodes: 4237</p>
        </section>
      </div>
    </main>

    <aside class="dock">
      <div class="docktop">
        <nav class="docktabs">
          <button aria-label="Selection"><svg><use href="#arrow"/></svg></button>
          <button aria-label="Zone management"><svg><use href="#grayplane"/></svg></button>
          <button aria-label="Material assignment"><svg><use href="#cube"/></svg></button>
          <button aria-label="Display settings"><svg><use href="#redgrid"/></svg></button>
          <button aria-label="Visualisation"><svg><use href="#eye"/></svg></button>
          <button aria-label="Shadow settings"><svg><use href="#sun"/></svg></button>
          <button class="current" aria-label="Analysis grid"><svg><use href="#bluegrid"/></svg></button>
          <button aria-label="Rays and particles"><svg><use href="#reddots"/></svg></button>
          <button aria-label="Parametric objects"><svg><use href="#trash"/></svg></button>
          <button aria-label="Object transformation"><svg><use href="#xform"/></svg></button>
          <button aria-label="Export manager"><svg><use href="#export"/></svg></button>
        </nav>
        <div class="panel">
          <h2>Analysis Grid</h2>
          <div class="well">
            <h3><svg viewBox="0 0 12 14"><path d="M1 1l5 5 5-5M1 7l5 5 5-5"/></svg>GRID SETTINGS</h3>
            <div class="body">
              <label class="check"><input type="checkbox" checked><span>Show Grid<u>l</u>ines</span></label>
              <label class="check"><input type="checkbox" checked><span>Shade Grid S<u>q</u>uares</span></label>
              <label class="check"><input type="checkbox"><span>Show <u>C</u>ontour Lines</span></label>
              <label class="check"><input type="checkbox"><span>C<u>l</u>ip To Minimum</span></label>
              <label class="check"><input type="checkbox"><span>Show Grid Ax<u>i</u>s</span></label>
              <hr>
              <label class="check"><input type="checkbox"><span>Show Node <u>V</u>alues</span></label>
              <label class="check sub"><input type="checkbox" disabled><span>Peaks &amp; Troughs</span></label>
              <label class="check sub"><input type="checkbox" disabled><span>Selected Only</span></label>
              <label class="check apart"><input type="checkbox" checked><span>Show <u>A</u>verage Value</span></label>
              <hr>
              <label class="check"><input type="checkbox"><span>Show Values in 3<u>D</u></span></label>
              <button class="btn spaced"><span>Grid <u>M</u>anagement...</span></button>
              <button class="btn strong down"><span>Display Analysis <u>G</u>rid</span></button>
            </div>
            <h3><svg viewBox="0 0 12 14"><path d="M1 1l5 5 5-5M1 7l5 5 5-5"/></svg>DATA &amp; SCALE</h3>
            <div class="body">
              <span class="combo"><select aria-label="Data"><option>Predicted Mean Vote</option></select><i></i></span>
              <div class="row"><label for="min">Minimum:</label><input id="min" value="-1.00"><button aria-label="Lock"><svg viewBox="0 0 16 16"><path d="M1 8h11v7H1z" fill="#111"/><path d="M9 8V4c0-4 5-4 5 0v2" fill="none" stroke="#333" stroke-width="2"/></svg></button></div>
              <div class="row"><label for="max">Maximum:</label><input id="max" class="picked" value="1.00"><button aria-label="Fit"><svg viewBox="0 0 16 16"><path d="M1 5V1h4zM11 1h4v4zM1 11v4h4zM15 11v4h-4z"/><path d="M2 2l4 4M14 2l-4 4M2 14l4-4M14 14l-4-4" stroke="#000" stroke-width="1.5"/></svg></button></div>
              <div class="row"><label for="con">Contours:</label><input id="con" value="0.50"><button aria-label="More"><svg viewBox="0 0 16 16"><path d="M6 3l5 5-5 5z"/></svg></button></div>
              <div class="pair wide"><button class="btn"><span>C<u>o</u>lours...</span></button><button class="btn"><span><u>V</u>olumetrics...</span></button></div>
            </div>
            <h3><svg viewBox="0 0 12 14"><path d="M1 1l5 5 5-5M1 7l5 5 5-5"/></svg>2D SLICE POSITION</h3>
            <div class="body">
              <div class="row axisrow"><label for="axis">Axis:</label><span class="combo"><select id="axis"><option>XY Axis</option></select><i></i></span></div>
              <div class="row offrow"><label for="off">Offset:</label><input id="off" value="1600.0"><span class="spin"><button aria-label="Raise">▲</button><button aria-label="Lower">▼</button></span></div>
              <input class="slider" type="range" min="0" max="100" value="40" aria-label="Slice offset">
              <label class="check"><input type="checkbox"><span>Snap to Cell <u>B</u>oundary</span></label>
              <hr>
              <button class="btn"><span>Auto-<u>F</u>it Grid to Objects...</span></button>
              <button class="btn strong fromleft"><span>Adjust Grid E<u>x</u>tents M</span></button>
              <hr>
              <div class="pair anim"><span class="combo"><select aria-label="Animation"><option>Animate Forwards</option></select><i></i></span><button class="btn" aria-label="Play"><svg viewBox="0 0 16 16"><path d="M4 0l8 8-8 8z" fill="#0d0" stroke="#060"/></svg></button></div>
              <div class="pair three"><button class="btn"><span>&lt;&lt; Min</span></button><button class="btn"><span>Max &gt;&gt;</span></button><button class="btn" aria-label="Step"><svg viewBox="0 0 16 16"><path d="M6 3l5 5-5 5z"/></svg></button></div>
            </div>
            <h3><svg viewBox="0 0 12 14"><path d="M1 1l5 5 5-5M1 7l5 5 5-5"/></svg>HIDDEN NODES</h3>
            <div class="body">
              <div class="pair three"><button class="btn" disabled><span><u>H</u>ide</span></button><button class="btn" disabled><span><u>S</u>how</span></button><button class="btn" aria-label="Options"><svg viewBox="0 0 16 16"><path d="M6 3l5 5-5 5z"/></svg></button></div>
              <button class="btn strong"><span>&nbsp;Select Grid <u>N</u>odes</span></button>
            </div>
            <h3><svg viewBox="0 0 12 14"><path d="M1 1l5 5 5-5M1 7l5 5 5-5"/></svg>CALCULATIONS</h3>
            <div class="body">
              <label class="radio"><input type="radio" name="calc" checked><span>L<u>i</u>ghting Levels</span></label>
              <label class="radio"><input type="radio" name="calc"><span><u>I</u>nsolation Levels</span></label>
              <label class="radio"><input type="radio" name="calc"><span><u>S</u>patial Comfort</span></label>
              <label class="radio"><input type="radio" name="calc"><span><u>C</u>FD Cell Blockages</span></label>
              <label class="radio"><input type="radio" name="calc"><span><u>L</u>oad CFD Data</span></label>
              <button class="btn strong"><span>Pe<u>r</u>form Calculation...</span></button>
            </div>
          </div>
        </div>
      </div>
      <div class="dockfoot">
        <button class="tool" aria-label="Fit grid"><svg><use href="#zoomgrid"/></svg></button>
        <button class="tool" aria-label="Fit all"><svg><use href="#zoomall"/></svg></button>
        <button class="tool" aria-label="Fit plane"><svg><use href="#zoomplane"/></svg></button>
        <button class="tool" aria-label="Fit mesh"><svg><use href="#zoommesh"/></svg></button>
        <button class="tool" aria-label="Pick mesh"><svg><use href="#pickmesh"/></svg></button>
        <button class="tool" aria-label="Snapshot"><svg><use href="#snapshot"/></svg></button>
      </div>
      <div class="meter" aria-hidden="true"></div>
    </aside>
  </div>

  <footer class="status">
    <span class="count">0/714</span>
    <span class="flags"><b>Snap</b><em>AC</em><b>GL</b><em>I</em><b>MOP</b></span>
    <span class="idle">Idle</span>
    <span class="rest"></span>
  </footer>
</div>
<script src="plan.js"></script>
</body>
</html>
```
FILE: styles.css
```css
* { box-sizing: border-box; }
body {
  margin: 0;
  min-height: 100vh;
  padding: 0 50px 34px 23px;
  display: flex;
  flex-direction: column;
  background: #fff;
  color: #000;
  font: 15px "Liberation Sans", sans-serif;
}
h1, h2, h3, p, ul { margin: 0; padding: 0; font-weight: normal; }
button, input, select { font: inherit; color: inherit; margin: 0; padding: 0; border-radius: 0; }
button { background: none; border: 0; }
.sprite { position: absolute; width: 0; height: 0; }

.titlebar { height: 54px; flex: none; display: flex; align-items: center; padding-top: 18px; }
.logo { width: 23px; height: 24px; }
.titlebar h1 { flex: 1; margin-left: 6px; font: 23px/32px "Open Sans", "Noto Sans CJK SC", sans-serif; white-space: nowrap; }
.titlebar h1 span { font-size: 22px; }
.wincontrols { display: flex; }
.wincontrols button { width: 65px; height: 32px; display: grid; place-items: center; }
.wincontrols svg { width: 16px; height: 16px; fill: none; stroke: #111; stroke-width: 2; }
.wincontrols button:last-child { margin-right: 5px; }

.app { flex: 1; display: flex; flex-direction: column; background: #f0f0f0; border-bottom: 2px solid #1c1c20; }
.bars { flex: none; }
.barrow { display: flex; height: 49px; }
.bar {
  display: flex; align-items: center; height: 48px;
  border: solid #aaa; border-width: 0 2px 2px 0;
  box-shadow: inset 4px 0 #f0f0f0, inset 5px 0 #999, inset 6px 0 #fff;
}
.menubar { width: 600px; padding: 0 0 1px 22px; gap: 15px; }
.menubar a { color: #000; text-decoration: none; }
.datebar { width: 494px; margin-left: 158px; padding-left: 15px; gap: 3px; }
.snapbar { width: 494px; margin-left: 602px; padding: 0 0 4px 8px; gap: 3px; }
.iconbar { width: 600px; padding-left: 11px; }

.field {
  height: 27px; background: #fff; padding-left: 3px;
  border: 2px solid; border-color: #777 #fff #fff #777;
  font: 14px "Liberation Mono", monospace;
}
.short { width: 43px; }
.long { width: 66px; }
.spin { display: flex; flex-direction: column; width: 15px; height: 26px; border: 1px solid #888; flex: none; }
.spin button { flex: 1; font-size: 7px; line-height: 10px; border: 1px solid; border-color: #fff #999 #999 #fff; background: #f0f0f0; }
.combo {
  display: flex; height: 26px; background: #fff;
  border: 2px solid; border-color: #666 #888 #888 #666;
}
.combo select { flex: 1; min-width: 0; appearance: none; border: 0; background: none; padding-left: 4px; font: 14px "Liberation Mono", monospace; }
.combo i { width: 24px; margin: 0; background: #f0f0f0; border: 1px solid #888; display: grid; place-items: center; flex: none; }
.combo i::after { content: ""; border: 4px solid transparent; border-top: 5px solid #000; border-bottom: 0; }
.month { width: 86px; }
.drop { width: 36px; height: 36px; display: grid; place-items: center; background: linear-gradient(#000, #000) no-repeat 32px 32px / 4px 3px; flex: none; }
.drop svg { width: 30px; height: 30px; }
.datebar .drop { margin-left: -4px; }
.climate { font-size: 11px; line-height: 14px; white-space: nowrap; margin: 0 0 6px -2px; }
.axesbtn { width: 34px; margin-right: -3px; margin-left: -2px; }
.tinychecks { display: flex; flex-direction: column; gap: 1px; }
.tinychecks label { display: flex; align-items: center; gap: 7px; height: 17px; font-size: 10px; }
.tinychecks input { appearance: none; width: 15px; height: 16px; background: #fff; border: 1px solid; border-color: #777 #fff #fff #777; }
.zone { font-size: 10px; line-height: 15px; border-left: 1px solid #999; margin-left: 2px; padding-left: 4px; white-space: nowrap; }
.zone b { font-size: 16px; }

.tool { width: 43px; height: 40px; display: grid; place-items: center; flex: none; }
.tool svg { width: 32px; height: 33px; }
.sep { width: 2px; height: 36px; margin: 0 2px; background: #999; border-right: 1px solid #fff; flex: none; }
.toolbar .sep { margin: 0 3px 0 2px; }
.toolbar .blank { visibility: hidden; }

.work { flex: 1; display: flex; border-top: 1px solid #fff; }
.pagetabs { width: 25px; flex: none; padding: 3px 1px 0 2px; display: flex; flex-direction: column; gap: 2px; border-right: 1px solid #fff; }
.pagetabs button { height: 112px; display: grid; place-items: center; border: solid; border-width: 1px 0 2px 1px; border-color: #fff #999 #777 #fff; }
.pagetabs .current { height: 117px; margin-left: -2px; }
.pagetabs span { writing-mode: vertical-rl; transform: rotate(180deg); font: bold 16px "Liberation Mono", monospace; white-space: nowrap; }

.editor { flex: 1; min-width: 0; display: flex; flex-direction: column; border-left: 1px solid #fff; border-right: 2px solid #777; border-bottom: 2px solid #888; }
.toolbar { height: 51px; flex: none; display: flex; align-items: center; padding-left: 2px; }
.toolbar .tool { width: 44px; }
.stage { flex: 1; display: flex; padding: 0 6px 5px 0; }
.sidebar { width: 40px; flex: none; display: flex; flex-direction: column; align-items: center; border-top: 1px solid #888; padding-top: 4px; }
.sidebar hr { width: 29px; height: 2px; margin: 4px 0 3px; border: 0; background: #aaa; border-bottom: 1px solid #fff; }
.side { width: 34px; height: 36px; display: grid; place-items: center; position: relative; flex: none; }
.view { height: 38px; }
.side svg { width: 32px; height: 32px; }
.pressed { background: #f8f8f8; border: 1px solid; border-color: #888 #fff #fff #888; }
.more::after { content: ""; position: absolute; right: 0; bottom: 3px; border: 4px solid transparent; border-left: 5px solid #000; border-right: 0; }

.viewport { flex: 1; min-width: 0; display: grid; grid-template: minmax(0, 1fr) / minmax(0, 1fr); background: #fff; border: solid #888; border-width: 1px 0 0 1px; }
.viewport > * { grid-area: 1 / 1; }
.plan { width: 100%; height: 100%; display: block; }
.plan .lines path, .plan .lines ellipse { fill: none; vector-effect: non-scaling-stroke; stroke-width: 1.4; }
.plan .lines .teal { stroke: #10cbb0; stroke-width: 1.6; }
.plan .green, .plan .green ellipse { stroke: #0db030; }
.plan .moss, .plan .moss ellipse { stroke: #4a8c00; }
.plan .dark { stroke: #064010; }
.plan .salmon { stroke: #f58a70; }
.plan .orange { stroke: #ff5030; }
.plan .tan { stroke: #d8c888; }
.plan .lime { stroke: #96b820; }
.plan .blue { stroke: #1668b8; }
.plan .navy { stroke: #2a1848; }
.plan .magenta { stroke: #c82870; }
.plan .gold { stroke: #c08c18; }
#heat rect { stroke: #000; stroke-width: 1.2; }
.axis path { fill: none; stroke: red; stroke-width: 1.6; }
.axis text { fill: red; font-size: 10px; }
.north path { fill: none; stroke: #808080; stroke-width: 1.6; }
.north text { fill: #808080; font-size: 28px; }
.minor { stroke: #c8c8c8; stroke-width: 1.6; stroke-dasharray: 6 4; }
.major { stroke: #8c8c8c; stroke-width: 2; stroke-dasharray: 5 3; fill: none; }

.caption { align-self: start; justify-self: start; padding: 9px 0 0 9px; display: flex; flex-direction: column; }
.caption h2 { font-weight: bold; font-size: 29px; line-height: 36px; }
.caption h3 { font-weight: bold; font-size: 18px; line-height: 22px; }
.caption p { line-height: 20px; }
.caption small { font-size: 10px; line-height: 15px; }
.legend { align-self: start; justify-self: end; width: 43px; margin: 3px 8px 0 0; text-align: center; font-size: 13px; }
.legend span { display: block; font-size: 12px; line-height: 22px; height: 24px; margin-right: 6px; }
.legend ul { list-style: none; height: 282px; display: flex; flex-direction: column; gap: 2px; color: #fff; }
.legend li { flex: 1; display: grid; place-items: center; }
.l10 { background: #ff0; color: #064000; padding-left: 4px; }
.l9 { background: #ffe000; color: #403000; }
.l8 { background: #ffae00; color: #402000; }
.l7 { background: #ff7b00; color: #401000; }
.l6 { background: #ff4200; color: #500000; }
.l5 { background: #f00; }
.l4 { background: #ff0022; }
.l3 { background: #bf0062; }
.l2 { background: #800098; }
.l1 { background: #4000cc; }
.l0 { background: #00f; }
.summary { align-self: end; justify-self: start; padding: 0 0 12px 6px; line-height: 20px; }

.dock { width: 292px; flex: none; display: flex; flex-direction: column; position: relative; }
.docktop { flex: 1; display: flex; }
.docktabs { width: 45px; flex: none; padding: 2px 0 0 5px; display: flex; flex-direction: column; gap: 3px; }
.docktabs button { height: 40px; display: grid; place-items: center; border: solid; border-width: 1px 0 2px 1px; border-color: #fff #777 #777 #fff; border-bottom-left-radius: 4px; }
.docktabs .current { height: 46px; margin: -3px 0 -3px -3px; background: #f4f4f4; }
.docktabs svg { width: 29px; height: 30px; }
.panel { flex: 1; min-width: 0; display: flex; flex-direction: column; padding: 0 9px 8px 6px; border: solid; border-width: 1px 3px 2px 1px; border-color: #fff #777 #888 #fff; }
.panel h2 { height: 34px; padding-top: 8px; text-align: center; font-weight: bold; font-size: 16px; color: #777; }
.well { flex: 1; min-width: 0; background: #a0a0a0; border: 2px solid; border-color: #777 #fff #fff #777; color: #fff; }
.well h3 { height: 26px; background: #000; display: flex; align-items: center; gap: 7px; padding-left: 6px; font: bold 16px "Liberation Mono", monospace; }
.well h3 svg { width: 12px; height: 14px; fill: none; stroke: #fff; stroke-width: 2; }
.body { padding: 2px 23px 7px 5px; display: flex; flex-direction: column; }
.body hr { width: 209px; height: 2px; margin: 3px 0 3px -5px; border: 0; background: #000; }
.check { display: flex; align-items: center; gap: 7px; height: 19px; padding-left: 2px; white-space: nowrap; }
.check input { appearance: none; width: 17px; height: 17px; background: #fff; border: 2px solid; border-color: #777 #f0f0f0 #f0f0f0 #777; flex: none; }
.check:first-child { margin-top: -1px; }
.check input:checked::before { content: ""; display: block; width: 13px; height: 13px; background: #000; clip-path: polygon(10% 45%, 40% 70%, 90% 10%, 90% 40%, 40% 100%, 10% 75%); }
.check input:disabled { background: #f0f0f0; }
.sub { padding-left: 23px; color: #a0a0a0; text-shadow: 1px 1px #fff; }
.apart { margin-top: 8px; }
.btn {
  width: 100%; min-width: 0; height: 26px; overflow: hidden; display: flex; align-items: center; justify-content: center;
  background: #f0f0f0; color: #111; border: solid; border-width: 2px 3px 3px 2px; border-color: #fff #777 #777 #fff;
  font: 14px "Liberation Mono", monospace;
}
.btn span { white-space: nowrap; flex: none; }
.btn svg { width: 15px; height: 16px; flex: none; }
.btn:disabled { color: #999; }
.strong { font-weight: bold; font-size: 16px; color: #000; margin-top: 2px; }
.down { background: #f8f8f8; border-color: #777 #fff #fff #777; }
.fromleft { justify-content: flex-start; }
.spaced { margin-top: 4px; }
.row { display: flex; height: 23px; align-items: center; }
.row label { width: 58px; flex: none; overflow: hidden; white-space: nowrap; }
.row > input { flex: 1; min-width: 0; height: 22px; background: #fff; color: #000; border: 2px solid; border-color: #777 #aaa #aaa #777; padding-left: 1px; font: 14px "Liberation Mono", monospace; }
.row > button { width: 24px; height: 22px; margin-left: 1px; background: #f0f0f0; border: 2px solid; border-color: #fff #777 #777 #fff; display: grid; place-items: center; }
.row > button svg { width: 15px; height: 15px; }
.row .picked { color: #fff; background: linear-gradient(#0a90ff, #0a90ff) no-repeat 1px 0 / 34px 17px #fff; }
.pair { display: grid; gap: 1px; }
.wide { grid-template-columns: 65px minmax(0, 1fr); margin: 11px 0 1px; }
.wide .btn { height: 24px; }
.axisrow { height: 30px; padding-right: 2px; color: #fff; }
.axisrow .combo { flex: 1; min-width: 0; color: #000; }
.offrow { padding-right: 2px; }
.row .spin { height: 22px; color: #000; }
.row .spin button { line-height: 7px; }
.well .combo { color: #000; min-width: 0; }
.slider { appearance: none; width: 192px; height: 20px; margin: 5px 0; background: none; }
.slider::-webkit-slider-runnable-track { height: 12px; background: #fff; border: 2px solid; border-color: #777 #fff #fff #777; }
.slider::-webkit-slider-thumb { appearance: none; width: 10px; height: 20px; margin-top: -6px; background: #e8e8e8; border: solid #888; border-width: 0 2px 1px 0; clip-path: polygon(0 0, 100% 0, 100% 75%, 50% 100%, 0 75%); }
.slider + .check + hr { margin: 5px 0 4px -5px; }
.anim { grid-template-columns: minmax(0, 1fr) 24px; margin-bottom: 2px; }
.three { grid-template-columns: 70px minmax(0, 1fr) 24px; }
.three .btn { height: 23px; }
.radio { display: flex; align-items: center; gap: 8px; height: 20px; padding-left: 3px; font: 14px "Liberation Mono", monospace; white-space: nowrap; }
.radio input { appearance: none; width: 15px; height: 15px; border-radius: 8px; background: #fff; border: 2px solid; border-color: #777 #fff #fff #777; flex: none; display: grid; place-items: center; }
.radio input:checked::before { content: ""; width: 6px; height: 6px; border-radius: 3px; background: #000; }
.dockfoot { display: flex; padding: 4px 0 4px 3px; }
.meter { position: absolute; right: 0; top: 884px; width: 15px; height: 83px; border-radius: 5px 0 0 5px; background: repeating-linear-gradient(#2a3040 0 2px, transparent 2px 4px) no-repeat 6px 9px / 6px 36px, repeating-linear-gradient(#3ccc98 0 2px, transparent 2px 4px) no-repeat 6px 47px / 6px 27px, #4c566a; }

.status { height: 28px; flex: none; display: flex; gap: 4px; padding-top: 3px; border-top: 1px solid #fff; font: 22px/34px "Open Sans", sans-serif; }
.status > span { height: 24px; overflow: hidden; border: solid #999; border-width: 2px 1px 0 1px; white-space: nowrap; }
.status .count { width: 95px; line-height: 22px; text-align: center; border-left: 0; }
.flags { width: 188px; display: flex; justify-content: space-between; padding: 0 3px; }
.flags b { font-weight: normal; }
.flags em { font-style: normal; color: #fff; }
.idle { width: 189px; padding-left: 4px; }
.status .rest { flex: 1; border-right: 0; }
```
FILE: plan.js
```js
const NS = "http://www.w3.org/2000/svg";
const X0 = 786.8, Y0 = 384.6, DX = 11.44, DY = 13.03;

function add(parent, tag, attrs) {
  const el = document.createElementNS(NS, tag);
  for (const k in attrs) el.setAttribute(k, attrs[k]);
  parent.appendChild(el);
}

// Reference grid of the model space.
const ref = document.getElementById("refgrid");
for (let k = 1; k < 12; k++) {
  const x = 711.5 + k * 85.4;
  add(ref, "line", { x1: x, x2: x, y1: 286, y2: 1441, class: k % 5 === 4 ? "major" : "minor" });
}
for (let k = 1; k < 13; k++) {
  const y = 286 + k * 88.85;
  add(ref, "line", { x1: 711.5, x2: 1736, y1: y, y2: y, class: k % 5 === 4 ? "major" : "minor" });
}
add(ref, "rect", { x: 711.5, y: 286, width: 1024.5, height: 1155, class: "major" });

// PMV values x100, sampled at [columns] x [rows]; cells between are interpolated.
const regions = [
  // north-west bedroom
  [[10,14,17,21,23,25,26,27,28,29], {
    0:[80,76,68,55,47,41,38,33,20,-20], 1:[80,75,68,54,45,38,33,22,5,-30],
    2:[79,74,66,50,40,25,15,-10,-40,-75], 3:[78,73,65,48,36,12,-5,-22,-55,-100],
    10:[66,62,59,46,34,8,-10,-35,-65,-95], 11:[64,62,59,46,36,20,5,-15,-30,-45],
    12:[62,62,58,50,42,30,22,10,0,-20], 13:[58,60,60,55,48,42,38,30,28,25],
    14:[48,58,62,60,57,54,52,50,48,65], 15:[38,50,62,62,62,60,58,56,55,70],
    16:[25,38,60,64,66,66,64,60,58,75], 17:[0,15,58,64,66,66,64,62,60,75],
    18:[-32,0,60,64,66,66,64,62,60,68], 19:[-80,-35,-28,-45,-45,-50,-50,-55,-60,-70] }],
  [[10,12,13], { 20:[-100,-100,-100], 21:[-30,-32,-48] }],
  [[16,27,29], { 20:[-100,-100,-100], 21:[-100,-100,-88] }],
  // wall strip between bedroom and bathroom
  [[30,31], { 2:[-100,-50], 3:[-100,-60], 10:[-100,-58], 11:[-88,-72], 12:[-55,-42], 13:[15,55],
    14:[35,70], 15:[80,90], 18:[88,92], 19:[-5,85], 20:[-50,75], 21:[-20,80], 22:[-5,55], 23:[18,55], 25:[40,52], 30:[60,55], 37:[80,60] }],
  // bathroom
  [[33,34], { 0:[-40,42], 1:[-5,42] }],
  [[34,40,44,45,46,47], { 0:[42,40,42,-50,-100,-100], 1:[42,40,42,-55,-100,-100] }],
  [[32,36,40,44,45,46,47], { 2:[42,40,38,42,-55,-100,-100], 7:[42,32,30,42,-65,-100,-100],
    9:[40,22,18,40,-62,-100,-100], 10:[38,18,15,36,-45,-95,-100] }],
  [[32,36,40,44], { 11:[-8,5,5,-20], 12:[-8,5,0,-30], 13:[65,58,50,15], 14:[72,60,50,35],
    15:[80,66,55,50], 16:[85,75,60,52], 18:[95,88,62,58] }],
  [[45,46], { 13:[40,48], 15:[50,50], 18:[58,60] }],
  // north-east bedroom
  [[48,49,50,51,52,53,55,58,61,65,70], {
    0:[-65,-45,-38,-20,-10,-5,8,22,30,36,42], 3:[-100,-65,-45,-28,-14,-5,8,22,30,36,42],
    8:[-85,-65,-45,-28,-14,-5,8,24,30,36,42], 10:[-65,-50,-38,-22,-12,0,10,25,32,38,42],
    11:[-40,-30,-22,-12,-5,2,12,26,33,38,42], 12:[-8,-5,-5,-2,3,8,16,28,34,39,42] }],
  [[47], { 11:[-48], 12:[-5] }],
  [[47,50,52,56,60,65,69,70], { 13:[30,12,14,24,32,38,42,42], 15:[30,20,20,26,33,39,42,35],
    16:[32,25,24,28,34,40,43,5], 17:[34,30,26,30,35,40,44,-10], 18:[35,32,30,32,37,42,45,-25] }],
  [[47,60,61,62,63,65,69,70], { 19:[-65,-55,-42,-15,22,48,58,-10] }],
  [[47,60,61,62,63,64,65,69,70], { 20:[-100,-98,-90,-45,25,65,82,90,10] }],
  // living room
  [[31,32,38], { 19:[88,95,88], 20:[80,98,88], 21:[70,95,100] }],
  [[39,44], { 21:[100,100] }],
  [[45,46,47,48,50,54,58,60,61,62,63,64,65,69,70], {
    21:[45,-28,-72,-85,-92,-95,-90,-85,-70,-30,40,90,100,100,38],
    22:[55,-15,-35,-60,-80,-88,-74,-60,-42,-5,40,72,100,100,38],
    23:[62,20,5,-8,-30,-45,-42,-30,-18,10,42,72,98,100,42],
    24:[70,52,42,25,0,-12,-12,0,20,42,58,76,98,100,52],
    25:[82,72,60,48,28,12,15,35,45,55,68,85,96,100,65],
    26:[92,85,75,65,50,35,35,55,60,70,82,90,98,100,95],
    27:[98,94,85,78,62,50,50,66,70,78,88,96,100,100,100],
    28:[100,98,92,86,75,65,65,75,80,88,95,100,100,100,100],
    29:[100,100,95,92,84,75,76,84,88,94,98,100,100,100,100],
    31:[100,100,100,98,92,86,88,93,96,98,100,100,100,100,100],
    35:[100,100,100,100,100,100,100,100,100,100,100,100,100,100,100],
    43:[100,100,100,100,100,100,100,100,100,100,100,100,100,100,100] }],
  [[71,76], { 27:[100,100], 43:[100,100] }],
  [[31,32,33,44], { 22:[58,80,100,100], 30:[60,84,100,100], 37:[60,90,100,100],
    38:[45,92,100,100], 41:[42,92,100,100], 43:[42,90,100,100] }],
  // west room
  [[0,9,12,13], { 22:[46,56,58,32], 24:[46,50,52,32], 34:[44,45,42,30] }],
  [[4,12,13], { 35:[46,44,30], 37:[46,44,25], 38:[-48,-52,-58], 39:[-100,-100,-100], 40:[-98,-100,-100] }],
  // bathroom in the centre
  [[14], { 22:[-85], 23:[-85], 24:[-70], 25:[-35], 26:[20], 32:[20], 33:[-15], 34:[-40], 35:[-62], 37:[-60] }],
  [[15,18,20,22,24,26,27,28,29], {
    22:[-100,-100,-100,-98,-92,-75,-60,-48,-30], 23:[-100,-92,-80,-70,-60,-40,-25,-10,0],
    24:[-100,-80,-65,-55,-40,-25,-12,0,10], 25:[-95,-65,-55,-40,-28,-12,0,10,22],
    26:[-30,-45,-38,-28,-12,0,5,18,28], 27:[-5,-22,-20,-12,-5,3,10,20,32],
    30:[-5,-3,0,0,5,12,18,28,45], 32:[-5,-5,-3,0,4,12,20,30,50],
    33:[-25,-30,-22,-15,-5,5,15,28,55], 34:[-75,-60,-48,-35,-22,-5,10,25,55],
    35:[-100,-80,-65,-45,-30,-12,5,25,60], 36:[-100,-92,-80,-62,-50,-28,-10,20,65],
    37:[-100,-100,-100,-95,-82,-42,0,40,72] }],
  [[17,26], { 38:[-100,-100], 40:[-100,-100], 41:[-85,-80] }],
  // south-west bedroom
  [[0,1,2,3,4,6,8,10,12,13,14,15,16], {
    41:[65,50,20,-5,-42,-58,-98,-100,-100,-100,-100,-100,-100],
    42:[65,52,32,10,-10,-35,-60,-72,-95,-100,-100,-100,-95],
    44:[65,55,42,28,10,-12,-32,-55,-82,-98,-100,-100,-75],
    47:[65,60,50,42,32,12,0,-20,-52,-75,-100,-100,-52],
    49:[68,62,56,48,42,25,10,-5,-30,-60,-92,-100,-42] }],
  [[0,4,8,12,13,14], { 50:[68,48,25,-8,-18,-28], 51:[70,52,32,10,5,0] }],
  [[0,5,10,13,15,16,17,18,19,20,21,22,24,27,28], {
    52:[74,60,44,34,18,-5,-42,-72,-72,-55,-20,-30,-8,8,30],
    53:[76,62,46,38,25,10,-10,-25,-25,-15,-5,-5,5,18,34],
    54:[78,64,48,40,32,22,10,5,5,5,5,8,12,28,38],
    56:[80,67,52,44,36,32,26,22,20,20,20,22,22,32,42] }],
  [[29,30], { 52:[58,20], 53:[60,40], 56:[56,45] }],
  // shower room
  [[17,19,22,24,26], { 42:[-35,-58,-62,-58,-30], 43:[-15,-35,-45,-40,-15], 44:[-5,-12,-15,-12,-5],
    45:[5,0,-5,-5,-5], 47:[25,18,12,8,5], 50:[25,22,20,15,8], 51:[-32,-48,-35,12,8] }],
  [[27,28,29,30,31], { 46:[-35,-85,-100,-100,-50], 47:[-12,-30,-100,-100,-60], 49:[-5,-12,-100,-98,-66],
    50:[5,0,-55,-80,-55], 51:[12,8,-8,-10,0] }],
  // hallway
  [[31], { 44:[40], 45:[0] }],
  [[31], { 52:[48], 56:[45], 57:[35], 58:[18] }],
  [[32,33,35,37,39], { 44:[82,88,92,95,100], 45:[52,70,80,88,98], 46:[-2,30,50,65,92],
    48:[-18,15,42,58,80], 50:[-5,22,42,55,70], 52:[38,42,50,55,65], 56:[48,46,46,50,58],
    57:[25,25,28,35,48], 58:[18,18,20,25,38] }],
  [[29,30,31,32,39], { 59:[-45,-88,-66,-8,-20] }],
  [[33,37,38], { 60:[0,-5,-25], 61:[5,10,-15] }],
  // south bedroom
  [[9,14,17,19,20,21,22,23,25,28], {
    57:[-35,-60,-68,-62,-48,-15,-5,30,42,48], 58:[-100,-100,-100,-92,-72,-72,-25,35,50,58],
    59:[-98,-100,-100,-92,-72,-45,-10,42,65,68], 60:[-52,-88,-72,-65,-42,-8,22,35,52,60],
    61:[-38,-52,-52,-40,-22,-5,26,36,50,60], 62:[-12,-28,-22,-12,-5,5,24,36,48,58],
    63:[-10,-12,-8,0,5,15,30,40,50,58], 65:[12,12,15,22,28,32,40,45,54,62],
    68:[35,36,38,42,44,46,48,52,58,63], 71:[50,50,52,55,56,58,58,60,62,66],
    75:[60,62,64,64,65,65,66,67,68,70], 76:[-35,-35,-35,-35,-35,-35,-35,-35,-35,-35] }],
  // south-east strip
  [[29,30,31,32,33,34,35,36,37,38,39], {
    62:[-50,-98,-96,-48,-18,-10,-5,5,18,28,42], 64:[-55,-100,-98,-72,-42,-22,-12,0,10,22,42],
    70:[-56,-100,-100,-80,-58,-28,-15,-5,8,22,42], 74:[-52,-98,-96,-76,-42,-18,0,10,20,35,52],
    75:[-50,-98,-92,-60,-25,5,15,22,32,45,58], 76:[-98,-100,-96,-48,28,38,44,50,56,60,62] }],
];

const stops = [[-100,0,0,255],[-80,64,0,204],[-60,128,0,150],[-40,191,0,98],[-20,248,0,36],[-4,255,0,0],
  [20,255,66,0],[40,255,123,0],[60,255,174,0],[80,255,224,0],[94,255,255,0],[101,255,255,0]];

function lerpTable(keys, t) {
  let i = 0;
  while (i < keys.length - 2 && t > keys[i + 1]) i++;
  const j = Math.min(i + 1, keys.length - 1);
  return [i, j, j === i ? 0 : (t - keys[i]) / (keys[j] - keys[i])];
}
function colour(v) {
  const [i, j, f] = lerpTable(stops.map(s => s[0]), v);
  return "rgb(" + [1, 2, 3].map(k => Math.round(stops[i][k] + f * (stops[j][k] - stops[i][k]))).join() + ")";
}

const cells = new Map();
for (const [cols, table] of regions) {
  const rows = Object.keys(table).map(Number).sort((a, b) => a - b);
  for (let r = rows[0]; r <= rows[rows.length - 1]; r++) {
    const [ri, rj, rf] = lerpTable(rows, r);
    for (let c = cols[0]; c <= cols[cols.length - 1]; c++) {
      const [ci, cj, cf] = lerpTable(cols, c);
      const a = table[rows[ri]], b = table[rows[rj]];
      const top = a[ci] + cf * (a[cj] - a[ci]);
      const low = b[ci] + cf * (b[cj] - b[ci]);
      cells.set(r * 100 + c, top + rf * (low - top));
    }
  }
}
const heat = document.getElementById("heat");
for (const [key, v] of cells) {
  const r = Math.floor(key / 100), c = key % 100;
  const x = Math.round(X0 + c * DX), y = Math.round(Y0 + r * DY);
  add(heat, "rect", {
    x, y,
    width: Math.round(X0 + (c + 1) * DX) - x,
    height: Math.round(Y0 + (r + 1) * DY) - y,
    fill: colour(v),
  });
}
```
